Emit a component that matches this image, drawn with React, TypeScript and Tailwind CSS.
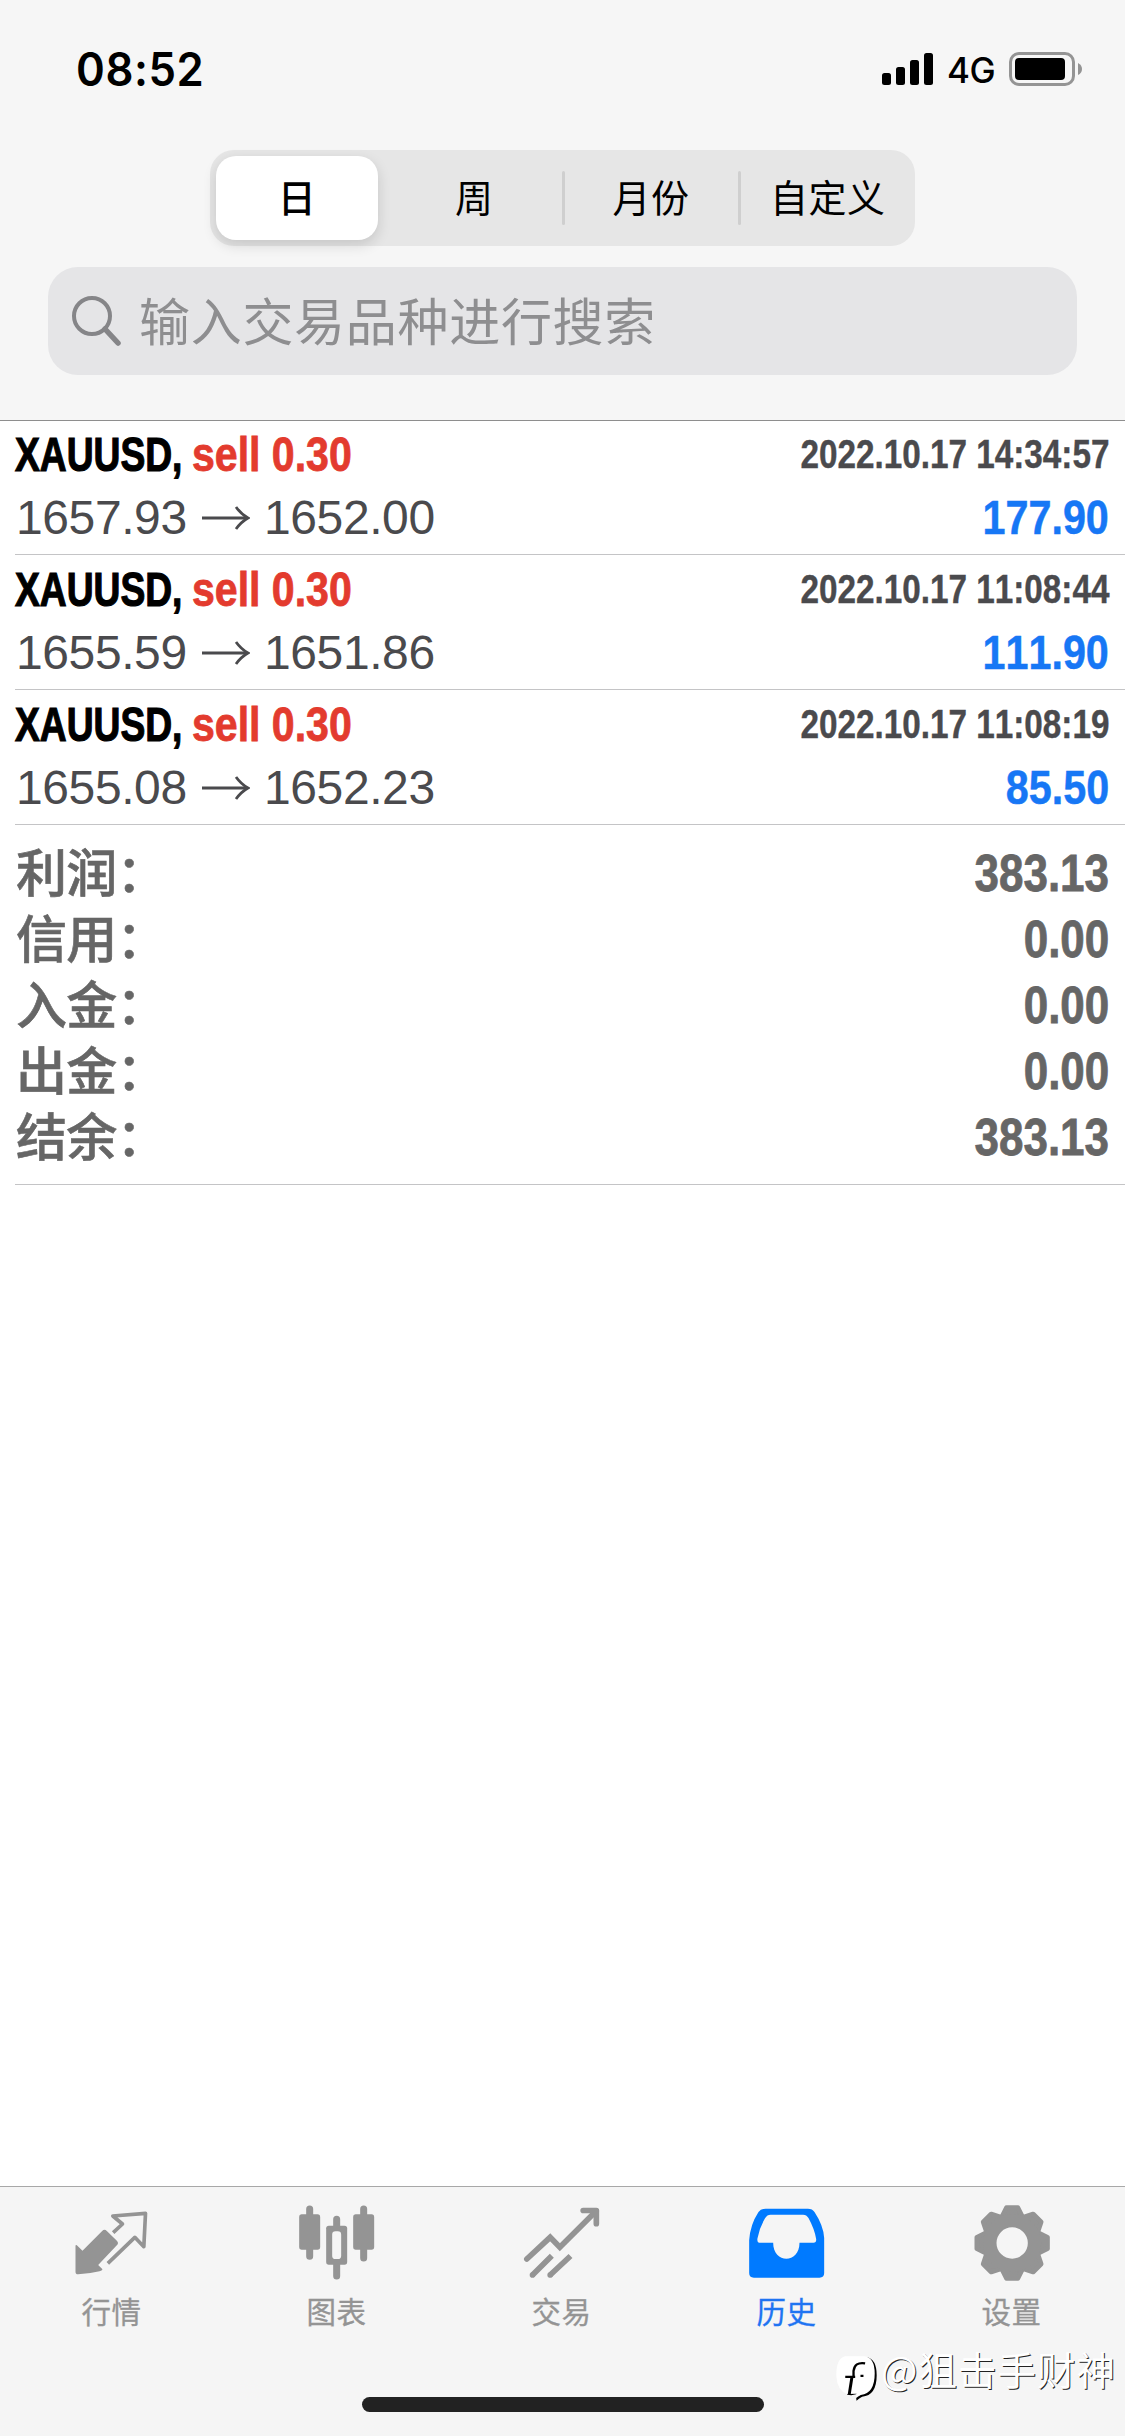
import React, { useState } from 'react';

const periods = ['日', '周', '月份', '自定义'];

const deals = [
  { id: 1, symbol: 'XAUUSD,', side: 'sell 0.30', open: '1657.93', close: '1652.00', time: '2022.10.17 14:34:57', profit: '177.90' },
  { id: 2, symbol: 'XAUUSD,', side: 'sell 0.30', open: '1655.59', close: '1651.86', time: '2022.10.17 11:08:44', profit: '111.90' },
  { id: 3, symbol: 'XAUUSD,', side: 'sell 0.30', open: '1655.08', close: '1652.23', time: '2022.10.17 11:08:19', profit: '85.50' },
];

const totals = [
  { label: '利润：', value: '383.13' },
  { label: '信用：', value: '0.00' },
  { label: '入金：', value: '0.00' },
  { label: '出金：', value: '0.00' },
  { label: '结余：', value: '383.13' },
];

const tabs = [
  {
    id: 'quotes',
    title: '行情',
    icon: (
      <svg viewBox="218.5 100 240 240" className="w-20 h-20" fill="none">
        <path d="M230 227 L247 243 L306 184 Q313 177 320 184 L350 213 Q357 220 350 227 L294 286 L307 299 Q306 304 298 305 Q265 313 234 314 Q226 314 226 306 V230 Q226 224 230 227Z" fill="#949494" />
        <path d="M339 189 L367 163 L338 139 L436 131 L431 231 L404 203 L323 281" stroke="#949494" strokeWidth="11" strokeLinejoin="round" />
      </svg>
    ),
  },
  {
    id: 'charts',
    title: '图表',
    icon: (
      <svg viewBox="893.5 100 240 240" className="w-20 h-20" fill="none">
        <path d="M928.500 118 V260 M1009.500 149 V175 M1009.500 280 V319 M1090.500 118 V265" stroke="#949494" strokeWidth="21" strokeLinecap="round" />
        <rect x="897" y="134" width="63" height="106" rx="8" fill="#949494" />
        <rect x="1059" y="134" width="63" height="106" rx="8" fill="#949494" />
        <rect x="978" y="168" width="63" height="117" rx="8" fill="#949494" />
        <rect x="996" y="185" width="27" height="83" rx="10" fill="#f5f5f5" />
      </svg>
    ),
  },
  {
    id: 'trade',
    title: '交易',
    icon: (
      <svg viewBox="368.5 100 240 240" className="w-20 h-20" fill="none" stroke="#949494" strokeWidth="17">
        <path d="M380 268 L450 203 L479 233 L588 124" strokeLinecap="round" />
        <path d="M549 122.500 H588.500 V162" strokeLinecap="round" strokeLinejoin="round" />
        <path d="M397 316 L455 258 M450 316 L511 259" />
        <circle cx="397" cy="316" r="8.500" fill="#949494" stroke="none" />
        <circle cx="450" cy="316" r="8.500" fill="#949494" stroke="none" />
      </svg>
    ),
  },
  {
    id: 'history',
    title: '历史',
    icon: (
      <svg viewBox="1043.5 100 240 240" className="w-20 h-20">
        <path
          fillRule="evenodd"
          fill="#007aff"
          d="M1047 212 Q1050 165 1075 127 Q1082 117 1096 117 H1223 Q1237 117 1243 127 Q1270 168 1272 205 V310 Q1272 324 1258 324 H1061 Q1047 324 1047 310Z M1076 219 Q1070 217 1072 206 Q1078 174 1095 145 Q1101 135 1111 135 H1209 Q1219 135 1225 145 Q1243 178 1248 208 Q1249 219 1240 219 H1198 C1198 283 1119 283 1119 219Z"
        />
      </svg>
    ),
  },
  {
    id: 'settings',
    title: '设置',
    icon: (
      <svg viewBox="-117.5 -120 240 240" className="w-20 h-20">
        <g fill="#949494" stroke="#949494" strokeWidth="14" strokeLinejoin="round">
          {[0, 45, 90, 135, 180, 225, 270, 315].map((angle) => (
            <path key={angle} transform={`rotate(${angle})`} d="M-32 -76 L-17 -106 H17 L32 -76Z" />
          ))}
        </g>
        <circle r="67" fill="none" stroke="#949494" strokeWidth="40" />
      </svg>
    ),
  },
];

const StatusBar: React.FC = () => (
  <div className="h-[150px] shrink-0 flex justify-between pt-[44px] pl-[76px] pr-[42px]">
    <span className="font-['Inter'] font-semibold text-[46px] leading-[50px] tracking-[0.6px] origin-left scale-x-[0.95]">08:52</span>
    <div className="flex h-[50px] items-center gap-[14px]">
      <svg viewBox="0 0 52 32" className="w-[52px] h-8">
        <rect x="0" y="20" width="9" height="12" rx="2.500" />
        <rect x="14" y="14" width="9" height="18" rx="2.500" />
        <rect x="28" y="7" width="9" height="25" rx="2.500" />
        <rect x="42" y="0" width="9" height="32" rx="2.500" />
      </svg>
      <span className="font-['Inter'] font-medium text-[35px] leading-[50px] tracking-[-0.5px] w-[48px] -ml-px pt-px">4G</span>
      <svg viewBox="0 0 74 34" className="w-[74px] h-[34px]">
        <rect x="1.500" y="1.500" width="63" height="31" rx="8.500" fill="none" stroke="#949494" strokeWidth="3" />
        <rect x="6" y="6" width="50" height="22" rx="4" />
        <path d="M69 11 Q73 13 73 17 Q73 21 69 23Z" fill="#949494" />
      </svg>
    </div>
  </div>
);

const App: React.FC = () => {
  const [period, setPeriod] = useState('日');
  const [activeTab, setActiveTab] = useState('history');

  return (
    <div className="w-[1125px] h-[2436px] overflow-hidden bg-white text-black flex flex-col [font-kerning:none] font-['Liberation_Sans','Noto_Sans_CJK_SC',sans-serif]">
      {/* Header */}
      <header className="h-[421px] shrink-0 bg-[#f6f6f6] border-b border-[#8e8e8e] flex flex-col">
        <StatusBar />

        <div className="self-center w-[705px] h-24 rounded-[24px] bg-[#e6e6e6] py-[6px] pl-[6px] flex font-['Noto_Sans_CJK_SC',sans-serif]">
          {periods.map((p, i) => (
            <button
              key={p}
              onClick={() => setPeriod(p)}
              className={`relative h-[84px] text-[38px] tracking-[0.5px] leading-[80px] pb-1 ${i === 0 ? 'w-[162px] mr-[7px]' : 'flex-1'} ${
                period === p ? 'bg-white rounded-[20px] font-medium shadow-[0_5px_14px_rgba(0,0,0,0.14)]' : 'font-normal pl-[2px]'
              }`}
            >
              {i > 1 && <span className="absolute left-0 top-[15px] w-[3px] h-[54px] rounded-full bg-[#cfcfcf]" />}
              {p}
            </button>
          ))}
        </div>

        <div className="mt-[21px] mx-12 h-[108px] rounded-[30px] bg-[#e5e5e7] flex items-center">
          <svg viewBox="0 0 52 52" className="ml-[22px] w-[52px] h-[52px]" fill="none" stroke="#858588" strokeWidth="4">
            <circle cx="22" cy="21" r="18" />
            <path d="M35 34 L48 48" strokeWidth="5.500" strokeLinecap="round" />
          </svg>
          <span className="ml-[17px] pb-[5px] font-['Noto_Sans_CJK_SC',sans-serif] text-[51px] leading-[100px] tracking-[0.7px] text-[#8e8e90]">
            输入交易品种进行搜索
          </span>
        </div>
      </header>

      {/* Deals */}
      <main className="-mt-px flex-1 pl-[15px]">
        {deals.map((deal) => (
          <div key={deal.id} className="h-[135px] pt-[3px] pr-4 border-b border-[#c4c4c6] whitespace-nowrap">
            <div className="h-[63px] flex justify-between font-bold text-[48px] leading-[63px]">
              <div className="flex">
                <span className="w-[177px]">
                  <span className="inline-block origin-left scale-x-[0.775] [-webkit-text-stroke:1.2px]">{deal.symbol}</span>
                </span>
                <span className="inline-block origin-left scale-x-[0.855] text-[#e33b2e] [-webkit-text-stroke:0.8px]">{deal.side}</span>
              </div>
              <span className="origin-right scale-x-[0.832] text-[40px] leading-[62px] text-[#4a4a4d] [-webkit-text-stroke:0.4px]">{deal.time}</span>
            </div>
            <div className="h-[63px] flex justify-between text-[48px] leading-[63px]">
              <div className="flex items-center text-[#4a4a4d]">
                <span className="w-[187px] pl-px tracking-[-0.4px]">{deal.open}</span>
                <svg viewBox="0 0 48 26" className="w-12 h-[26px]" fill="none" stroke="#4a4a4d" strokeWidth="2.800">
                  <path d="M0 13 H45" />
                  <path d="M34 2 Q39 9 46 13 Q39 17 34 24" />
                </svg>
                <span className="ml-[14px] tracking-[-0.4px]">{deal.close}</span>
              </div>
              <span className="origin-right scale-x-[0.86] font-bold text-[#1777f5] [-webkit-text-stroke:0.5px]">{deal.profit}</span>
            </div>
          </div>
        ))}

        {/* Totals */}
        <div className="pt-[15px] pb-[14px] pr-4 border-b border-[#c4c4c6] text-[51px] leading-[66px] font-bold text-[#666666]">
          {totals.map((row) => (
            <div key={row.label} className="h-[66px] flex justify-between">
              <span className="pl-px font-['Noto_Sans_CJK_SC',sans-serif] font-medium leading-[60px] tracking-[-0.8px] [-webkit-text-stroke:0.6px]">{row.label}</span>
              <span className="origin-right scale-x-[0.862] leading-[68px] [-webkit-text-stroke:0.8px]">{row.value}</span>
            </div>
          ))}
        </div>
      </main>

      {/* Tab bar */}
      <footer className="relative h-[250px] shrink-0 bg-[#f5f5f5] border-t border-[#a8a8a8]">
        <nav className="flex pt-4">
          {tabs.map((tab) => (
            <button
              key={tab.id}
              onClick={() => setActiveTab(tab.id)}
              className={`flex-1 flex flex-col items-center font-['Noto_Sans_CJK_SC',sans-serif] text-[29.5px] tracking-[0.5px] leading-[44px] ${
                activeTab === tab.id ? 'text-[#1f74f2]' : 'text-[#949494]'
              }`}
            >
              {tab.icon}
              <span className="mt-[5px] mr-[2px] [-webkit-text-stroke:0.3px]">{tab.title}</span>
            </button>
          ))}
        </nav>
        <div className="absolute left-[362px] bottom-[24px] w-[402px] h-[15px] rounded-full bg-[#222222]" />

        {/* Watermark */}
        <div className="absolute left-[836px] top-[154px] flex items-center h-[56px] whitespace-nowrap">
          <svg viewBox="18 25 130 140" className="w-[43px] h-[47px] mt-[18px]">
            <path d="M50 30 H110 Q141 36 141 85 Q141 146 97 150 Q88 154 80 162 Q76 152 82 142 L64 146 L52 144 Z" fill="#000" />
            <path d="M46 28 H104 Q135 32 135 80 Q135 140 93 145 Q84 149 79 154 Q76 148 80 141 L52 142 Q22 132 19 88 Q18 34 46 28Z" fill="#fff" />
            <path d="M106 49 Q74 44 71 72 V88 M46 90 H76 M92 87 H101" fill="none" stroke="#000" strokeWidth="7" />
            <path d="M66 92 L58 143" fill="none" stroke="#000" strokeWidth="9" />
          </svg>
          <span className="ml-[2px] font-['Noto_Sans_CJK_SC',sans-serif] text-[38.5px] tracking-[1px] text-white [text-shadow:1px_1px_0_#222]">@狙击手财神</span>
        </div>
      </footer>
    </div>
  );
};

export default App;
